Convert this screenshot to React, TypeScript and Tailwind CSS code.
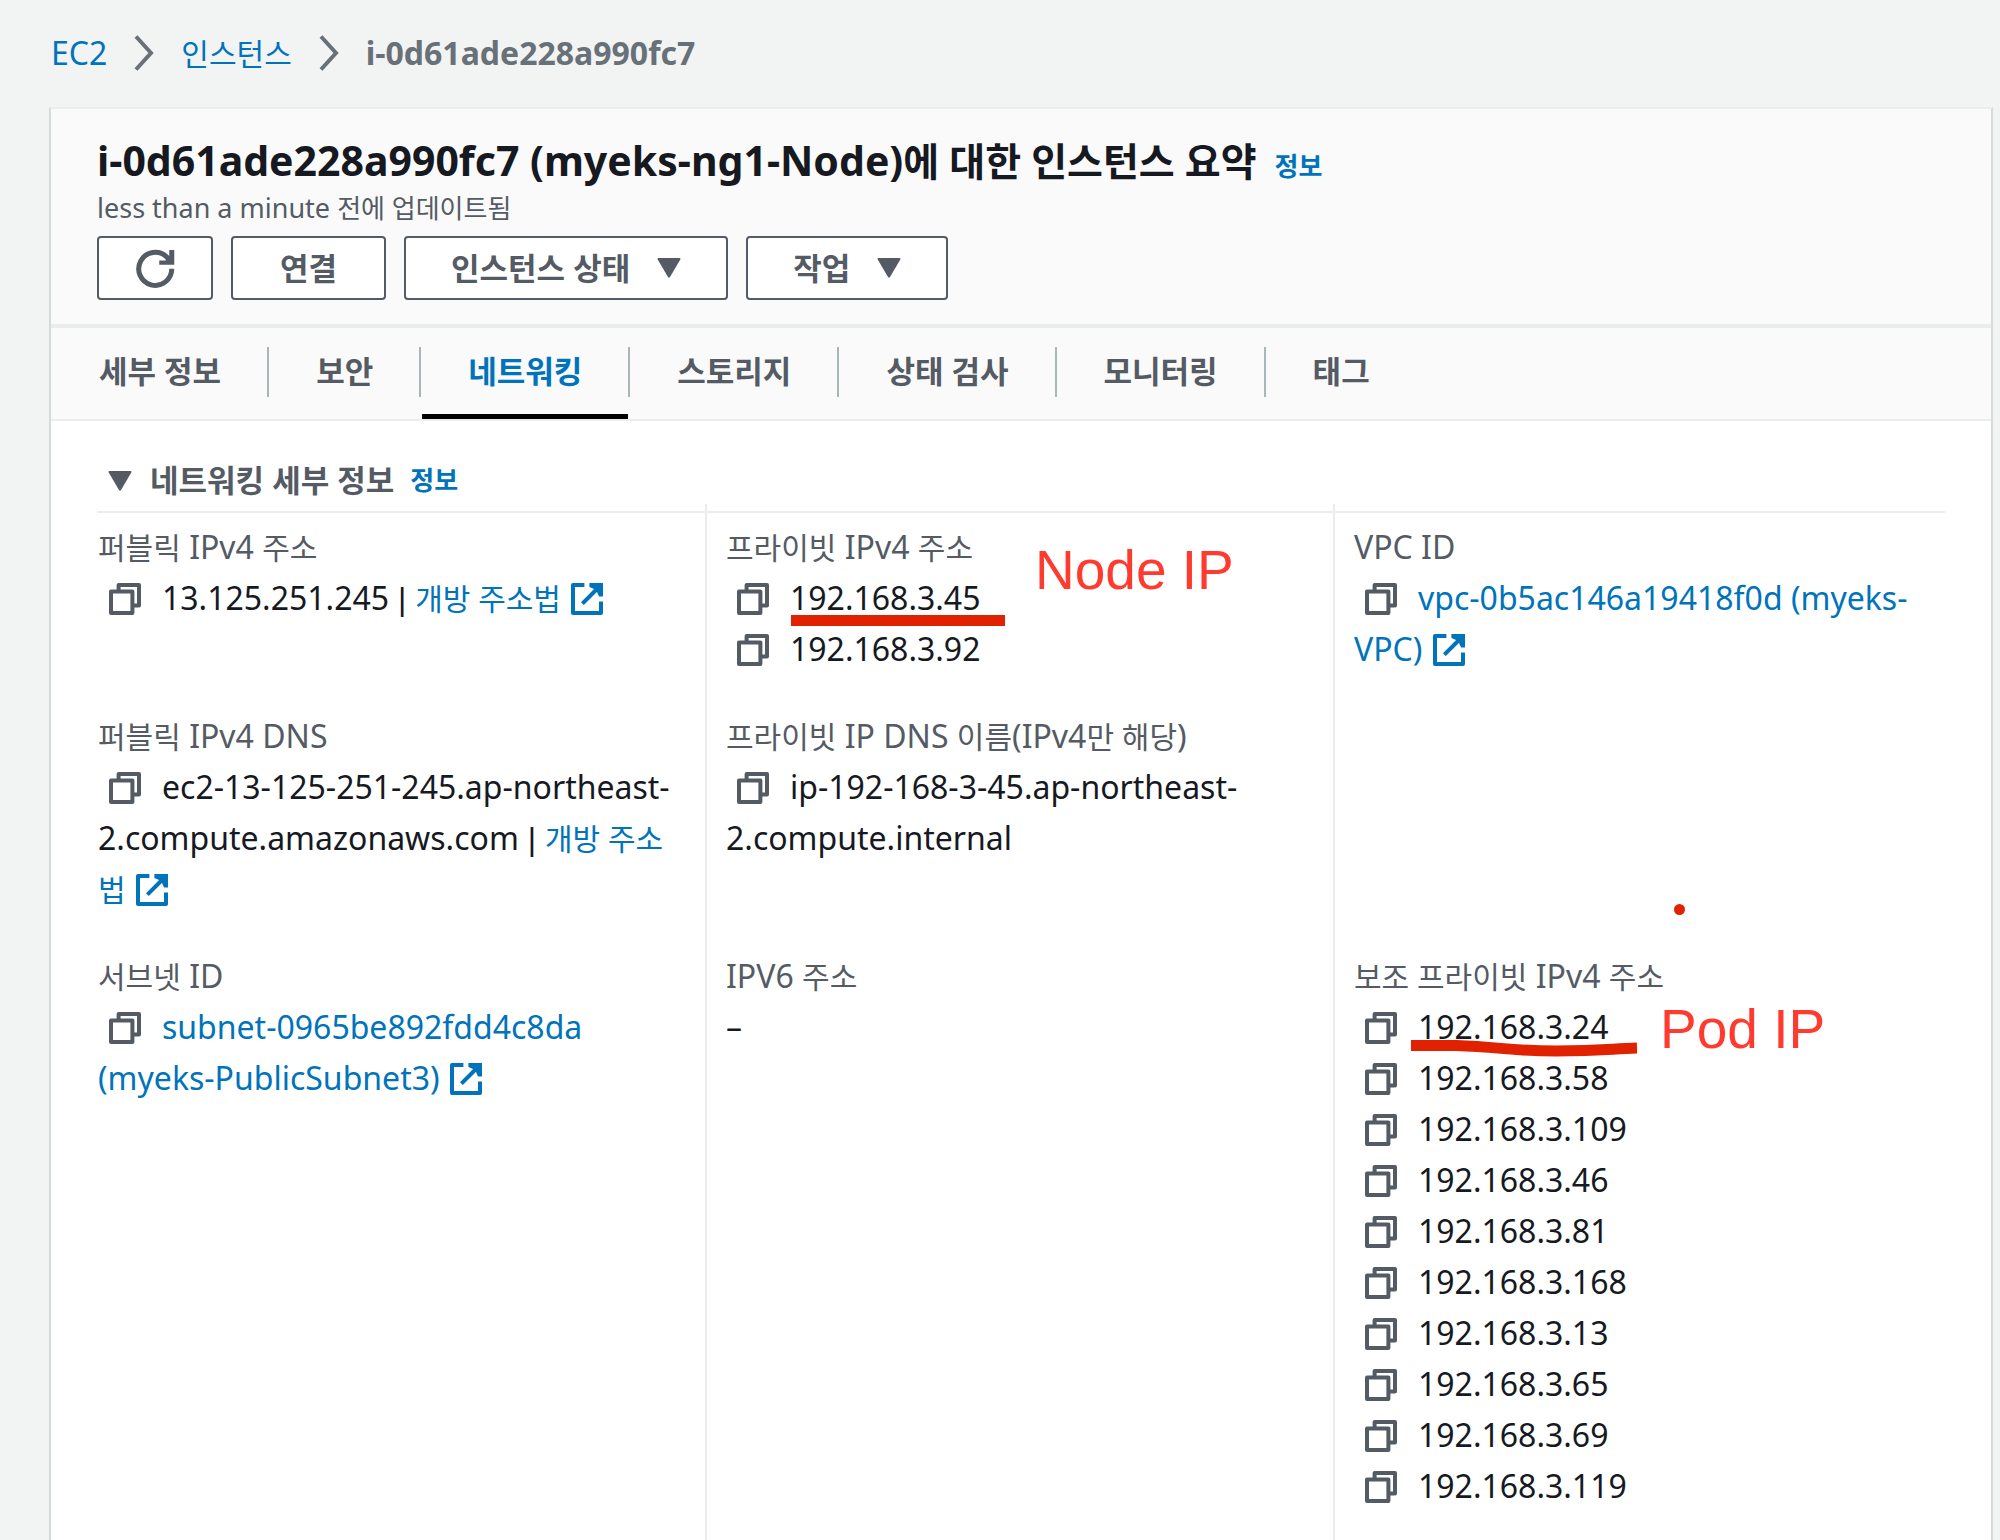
import type { ReactNode } from 'react';

const secondaryIps = [
  '192.168.3.24',
  '192.168.3.58',
  '192.168.3.109',
  '192.168.3.46',
  '192.168.3.81',
  '192.168.3.168',
  '192.168.3.13',
  '192.168.3.65',
  '192.168.3.69',
  '192.168.3.119',
];

const tabs = ['세부 정보', '보안', '네트워킹', '스토리지', '상태 검사', '모니터링', '태그'];
const activeTab = '네트워킹';

function CopyButton({ value }: { value: string }) {
  return (
    <button type="button" aria-label={`${value} 복사`} className="ml-[11px] mr-[21px] inline-block align-[-5px] text-[#545b64]">
      <svg viewBox="0 0 16 16" className="block size-8" fill="none" stroke="currentColor" strokeWidth="2" strokeLinejoin="round">
        <path d="M4.8 4.3V1H15v10.3h-3.3" />
        <path d="M1 4.3h10.7V15H1z" />
      </svg>
    </button>
  );
}

function ExternalIcon() {
  return (
    <svg viewBox="0 0 16 16" className="ml-0.5 inline-block size-8 align-[-5px]" fill="none" stroke="currentColor" strokeWidth="2">
      <path d="M6.7 1H1v14h14V9.3" strokeLinejoin="round" />
      <path d="M14.5 1.5 5.7 10.3" />
      <path d="M9.2 0H16v6.8h-2L13 4.500 11.500 3 9.200 2z" fill="currentColor" stroke="none" />
    </svg>
  );
}

function Caret() {
  return (
    <svg viewBox="0 0 24 20" className="h-5 w-6" fill="currentColor">
      <path d="M1.5 0h21q1.5 0 .8 1.6L13 19q-1 1.4-2 0L.7 1.6Q0 0 1.5 0z" />
    </svg>
  );
}

function Chevron() {
  return (
    <svg viewBox="0 0 20 36" className="h-9 w-5 text-[#687078]" fill="none" stroke="currentColor" strokeWidth="4">
      <path d="M2 1.5 17 18 2 34.5" />
    </svg>
  );
}

// Hangul runs slightly smaller than the Latin text around it
function Ko({ children }: { children: ReactNode }) {
  return <span className="text-[30px] leading-none">{children}</span>;
}

function Pipe() {
  return <span className="font-['Liberation_Sans',sans-serif] leading-none"> | </span>;
}

function Link({ children }: { children: ReactNode }) {
  return (
    <a href="#" className="text-[#0073bb]">
      {children}
    </a>
  );
}

interface FieldProps {
  label: ReactNode;
  className?: string;
  children: ReactNode;
}

function Field({ label, className = '', children }: FieldProps) {
  return (
    <div className={`relative border-l-2 px-[19px] ${className}`}>
      <dt className="text-[#545b64]">{label}</dt>
      <dd>{children}</dd>
    </div>
  );
}

export default function App() {
  return (
    <div className="flex min-h-screen flex-col bg-[#f2f3f3] pl-[49px] pr-[7px] font-['Noto_Sans','Noto_Sans_CJK_KR',sans-serif] text-[32px] leading-[51px] text-[#16191f]">
      <nav className="flex items-center gap-[27px] pb-[29px] pl-0.5 pt-[27px]">
        <Link>EC2</Link>
        <Chevron />
        <Link>
          <Ko>인스턴스</Ko>
        </Link>
        <Chevron />
        <span className="font-bold text-[#687078]">i-0d61ade228a990fc7</span>
      </nav>

      <main className="flex flex-1 flex-col border-x-2 border-t-2 border-x-[#d5dbdb] border-t-[#eaeded] bg-white">
        <header className="border-b-4 border-[#eaeded] bg-[#fafafa] px-[46px] pb-6 pt-[22px]">
          <h1 className="text-[41px] font-bold leading-[58px]">
            i-0d61ade228a990fc7 (myeks-ng1-Node)
            <span className="text-[39px] leading-none">에 대한 인스턴스 요약</span>
            <a href="#" className="ml-[18px] text-[26px] leading-none text-[#0073bb]">정보</a>
          </h1>
          <p className="text-[27px] leading-[38px] text-[#545b64]">
            less than a minute <span className="text-[26px] leading-none">전에 업데이트됨</span>
          </p>
          <div className="mt-[9px] flex gap-[18px] text-[31px] font-bold text-[#545b64]">
            <button type="button" aria-label="새로 고침" className="flex h-16 items-center rounded-sm border-2 border-[#545b64] bg-white px-9">
              <svg viewBox="0 0 16 16" className="size-10" fill="none" stroke="currentColor" strokeWidth="2">
                <path d="M14.7 8.3A6.6 6.6 0 1 1 12.7 3.6L14 5" />
                <path d="M15.7.8v5.9h-6V5h2.5l1.500-1.500V.8z" fill="currentColor" stroke="none" />
              </svg>
            </button>
            <button type="button" className="h-16 rounded-sm border-2 border-[#545b64] bg-white px-[47px]">연결</button>
            <button type="button" className="flex h-16 items-center gap-[27px] rounded-sm border-2 border-[#545b64] bg-white px-[45px]">
              인스턴스 상태 <Caret />
            </button>
            <button type="button" className="flex h-16 items-center gap-[27px] rounded-sm border-2 border-[#545b64] bg-white px-[45px]">
              작업 <Caret />
            </button>
          </div>
        </header>

        <div role="tablist" className="flex h-[93px] border-b-2 border-[#eaeded] bg-[#fafafa] pl-0.5 text-[31px] font-bold text-[#545b64]">
          {tabs.map((tab, i) => (
            <div key={tab} className="flex">
              {i > 0 && <span className="mr-px mt-[19px] h-[50px] w-0.5 bg-[#aab7b8]" />}
              <button
                type="button"
                role="tab"
                aria-selected={tab === activeTab}
                className={
                  tab === activeTab
                    ? 'border-b-[5px] border-black px-[46px] text-[#0073bb]'
                    : 'border-b-[5px] border-transparent px-[46px]'
                }
              >
                {tab}
              </button>
            </div>
          ))}
        </div>

        <section className="flex flex-1 flex-col px-[46px] pt-[34px]">
          <h2 className="flex items-center border-b-2 border-[#eaeded] pb-[5px] pl-[11px] text-[31px] font-bold text-[#545b64]">
            <Caret />
            <span className="ml-[18px]">네트워킹 세부 정보</span>
            <a href="#" className="ml-4 text-[26px] text-[#0073bb]">정보</a>
          </h2>

          <dl className="-ml-5 -mr-4 -mt-[9px] grid flex-1 grid-cols-3 grid-rows-[auto_auto_1fr]">
            <Field label={<><Ko>퍼블릭</Ko> IPv4 <Ko>주소</Ko></>} className="border-transparent pb-9 pt-[17px]">
              <CopyButton value="13.125.251.245" />
              13.125.251.245
              <Pipe />
              <Link>
                <Ko>개방 주소법</Ko> <ExternalIcon />
              </Link>
            </Field>
            <Field label={<><Ko>프라이빗</Ko> IPv4 <Ko>주소</Ko></>} className="border-[#eaeded] pb-9 pt-[17px]">
              <div><CopyButton value="192.168.3.45" />192.168.3.45</div>
              <div><CopyButton value="192.168.3.92" />192.168.3.92</div>
              <span className="absolute left-[84px] top-[111px] h-[11px] w-[214px] bg-[#e02200]" />
              <span className="absolute left-[328px] top-[39px] font-['Liberation_Sans',sans-serif] text-[55px] leading-[55px] text-[#ff3b30]">
                Node IP
              </span>
            </Field>
            <Field label="VPC ID" className="border-[#eaeded] pb-9 pt-[17px]">
              <CopyButton value="vpc-0b5ac146a19418f0d" />
              <Link>
                vpc-0b5ac146a19418f0d (myeks-VPC) <ExternalIcon />
              </Link>
            </Field>

            <Field label={<><Ko>퍼블릭</Ko> IPv4 DNS</>} className="border-transparent pb-9">
              <CopyButton value="ec2-13-125-251-245.ap-northeast-2.compute.amazonaws.com" />
              ec2-13-125-251-245.ap-northeast-2.compute.amazonaws.com
              <Pipe />
              <Link>
                <Ko>개방 주소법</Ko> <ExternalIcon />
              </Link>
            </Field>
            <Field label={<><Ko>프라이빗</Ko> IP DNS <Ko>이름</Ko>(IPv4<Ko>만 해당</Ko>)</>} className="border-[#eaeded] pb-9">
              <CopyButton value="ip-192-168-3-45.ap-northeast-2.compute.internal" />
              ip-192-168-3-45.ap-northeast-2.compute.internal
            </Field>
            <div className="relative border-l-2 border-[#eaeded]">
              <span className="absolute left-[339px] top-[194px] size-[11px] rounded-full bg-[#e02200]" />
            </div>

            <Field label={<><Ko>서브넷</Ko> ID</>} className="border-transparent">
              <CopyButton value="subnet-0965be892fdd4c8da" />
              <Link>
                subnet-0965be892fdd4c8da (myeks-PublicSubnet3) <ExternalIcon />
              </Link>
            </Field>
            <Field label={<>IPV6 <Ko>주소</Ko></>} className="border-[#eaeded]">
              –
            </Field>
            <Field label={<><Ko>보조 프라이빗</Ko> IPv4 <Ko>주소</Ko></>} className="border-[#eaeded] pb-6">
              {secondaryIps.map((ip) => (
                <div key={ip}><CopyButton value={ip} />{ip}</div>
              ))}
              <svg viewBox="0 0 226 20" className="absolute left-[76px] top-[89px] h-5 w-[226px]" fill="none" stroke="#e02200" strokeWidth="11">
                <path d="M0 6.5H45C90 8 100 12 145 12S198 10 226 9" />
              </svg>
              <span className="absolute left-[325px] top-[52px] font-['Liberation_Sans',sans-serif] text-[55px] leading-[55px] text-[#ff3b30]">
                Pod IP
              </span>
            </Field>
          </dl>
        </section>
      </main>
    </div>
  );
}
